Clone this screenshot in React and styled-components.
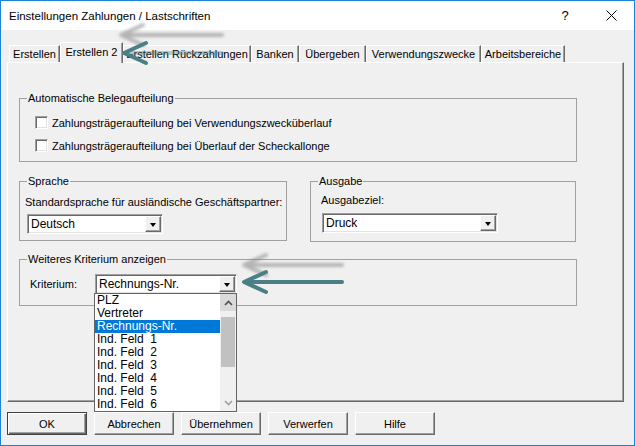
import React from "react";
import styled, { createGlobalStyle, css } from "styled-components";

const GlobalStyle = createGlobalStyle`
  html, body { margin: 0; padding: 0; background: #f0f0f0; }
  body { font-family: "Liberation Sans", Arial, sans-serif; }
`;

const Window = styled.div`
  position: relative;
  width: 635px;
  height: 446px;
  box-sizing: border-box;
  border: 1px solid #1883d7;
  background: #f0f0f0;
  display: flex;
  flex-direction: column;
  font-family: "Liberation Sans", Arial, sans-serif;
  font-size: 11px;
  color: #000;
  overflow: hidden;
`;

const TitleBar = styled.div`
  flex: none;
  height: 29px;
  background: #fff;
  display: flex;
  align-items: center;
`;

const Title = styled.div`
  flex: 1;
  padding-left: 8px;
  font-size: 11.5px;
`;

const CaptionButton = styled.div`
  width: 46px;
  height: 29px;
  display: flex;
  align-items: center;
  justify-content: center;
  font-size: 13px;
`;

const Body = styled.div`
  flex: 1;
  display: flex;
  flex-direction: column;
  padding: 12px 0 0 6px;
`;

const TabRow = styled.div`
  position: relative;
  z-index: 1;
  display: flex;
  align-items: flex-end;
  height: 21px;
  padding-left: 2px;
  margin-bottom: -1px;
`;

const Tab = styled.div`
  width: ${(p) => p.w}px;
  height: 17px;
  margin-bottom: 1px;
  box-sizing: border-box;
  background: #f0f0f0;
  border-top: 1px solid #fff;
  border-left: 1px solid #fff;
  border-right: 1px solid #696969;
  box-shadow: inset -1px 0 #a0a0a0;
  display: flex;
  align-items: center;
  justify-content: center;
  white-space: nowrap;
  ${(p) =>
    p.active &&
    css`
      height: 21px;
      margin-bottom: 0;
      padding-bottom: 3px;
    `}
`;

const Panel = styled.div`
  flex: none;
  width: 617px;
  height: 340px;
  box-sizing: border-box;
  border-top: 1px solid #fff;
  border-left: 1px solid #fff;
  border-right: 1px solid #696969;
  border-bottom: 1px solid #696969;
  box-shadow: inset -1px -1px #a0a0a0;
  padding: 28px 0 0 11px;
`;

const Group = styled.fieldset`
  margin: ${(p) => p.mt || 0}px 0 0 0;
  padding: 0;
  width: ${(p) => p.w}px;
  min-width: 0;
  box-sizing: border-box;
  border: 1px solid #a0a0a0;
`;

const Legend = styled.legend`
  margin-left: 7px;
  padding: 0 1px;
  line-height: 14px;
  font-size: 11px;
`;

const GroupBody = styled.div`
  padding: ${(p) => p.pad};
  display: flex;
  flex-direction: column;
  align-items: flex-start;
`;

const GroupRow = styled.div`
  display: flex;
  align-items: flex-start;
  gap: 23px;
  margin-top: 12px;
`;

const CheckRow = styled.div`
  height: 17px;
  display: flex;
  align-items: center;
  gap: 4px;
  & + & { margin-top: 6px; }
`;

const CheckBox = styled.span`
  width: 13px;
  height: 13px;
  box-sizing: border-box;
  background: #fff;
  border-top: 1px solid #a0a0a0;
  border-left: 1px solid #a0a0a0;
  border-right: 1px solid #fff;
  border-bottom: 1px solid #fff;
  box-shadow: inset 1px 1px #696969, inset -1px -1px #e3e3e3;
`;

const Label = styled.div`
  line-height: 14px;
  width: ${(p) => (p.w ? `${p.w}px` : "auto")};
  white-space: nowrap;
`;

const Combo = styled.div`
  position: relative;
  width: ${(p) => p.w}px;
  height: 20px;
  margin: ${(p) => p.m || 0};
  box-sizing: border-box;
  background: #fff;
  border-top: 1px solid #a0a0a0;
  border-left: 1px solid #a0a0a0;
  border-right: 1px solid #fff;
  border-bottom: 1px solid #fff;
  box-shadow: inset 1px 1px #696969, inset -1px -1px #e3e3e3;
  display: flex;
  align-items: center;
  padding: 1px;
`;

const ComboValue = styled.div`
  flex: 1;
  padding-left: 2px;
  font-size: 12px;
  white-space: nowrap;
`;

const ComboButton = styled.div`
  width: 16px;
  height: 16px;
  box-sizing: border-box;
  background: #f0f0f0;
  border: 1px solid;
  border-color: #fff #696969 #696969 #fff;
  box-shadow: inset -1px -1px #a0a0a0;
  display: flex;
  align-items: center;
  justify-content: center;
  &::after {
    content: "";
    border-left: 3.5px solid transparent;
    border-right: 3.5px solid transparent;
    border-top: 4px solid #000;
    margin-top: 1px;
  }
`;

const KritRow = styled.div`
  display: flex;
  align-items: center;
`;

const DropList = styled.div`
  position: absolute;
  z-index: 5;
  top: 100%;
  left: -2px;
  width: 143px;
  height: 119px;
  box-sizing: border-box;
  background: #fff;
  border: 1px solid #646464;
  display: flex;
`;

const Items = styled.div`
  flex: 1;
  display: flex;
  flex-direction: column;
`;

const Item = styled.div`
  height: 13px;
  line-height: 13px;
  padding-left: 2px;
  font-size: 12px;
  white-space: pre;
  ${(p) =>
    p.selected &&
    css`
      background: #0078d7;
      color: #fff;
    `}
`;

const ScrollBar = styled.div`
  width: 16px;
  display: flex;
  flex-direction: column;
  background: #f0f0f0;
`;

const ScrollArrow = styled.div`
  height: 17px;
  display: flex;
  align-items: center;
  justify-content: center;
  background: ${(p) => (p.hot ? "#dadada" : "#f0f0f0")};
`;

const Track = styled.div`
  flex: 1;
  padding-top: 6px;
`;

const Thumb = styled.div`
  height: 50px;
  margin: 0 1px;
  background: #c1c1c1;
`;

const ButtonRow = styled.div`
  display: flex;
  gap: 7px;
  margin-top: 10px;
`;

const Button = styled.div`
  width: 80px;
  height: 23px;
  box-sizing: border-box;
  background: #f0f0f0;
  border: 1px solid;
  border-color: #fff #696969 #696969 #fff;
  box-shadow: inset -1px -1px #a0a0a0;
  display: flex;
  align-items: center;
  justify-content: center;
  font-size: 11px;
  ${(p) =>
    p.primary &&
    css`
      border-color: #404040;
      box-shadow: inset 1px 1px #fff, inset -1px -1px #696969, inset -2px -2px #a0a0a0;
    `}
`;

const Annotations = styled.svg`
  position: absolute;
  top: -1px;
  left: -1px;
  pointer-events: none;
  z-index: 10;
`;

const tabs = [
  ["Erstellen", 51],
  ["Erstellen 2", 63, true],
  ["Erstellen Rückzahlungen", 128],
  ["Banken", 48],
  ["Übergeben", 67],
  ["Verwendungszwecke", 115],
  ["Arbeitsbereiche", 84],
];

const kriterien = [
  "PLZ",
  "Vertreter",
  "Rechnungs-Nr.",
  "Ind. Feld  1",
  "Ind. Feld  2",
  "Ind. Feld  3",
  "Ind. Feld  4",
  "Ind. Feld  5",
  "Ind. Feld  6",
];

function Chevron({ up, color }) {
  return (
    <svg width="9" height="6" viewBox="0 0 9 6">
      <polyline
        points={up ? "1,5 4.5,1.5 8,5" : "1,1 4.5,4.5 8,1"}
        fill="none"
        stroke={color}
        strokeWidth="1.6"
      />
    </svg>
  );
}

function Arrow({ tipX, y, endX, color, blur, shaftOpacity = 1 }) {
  return (
    <g
      stroke={color}
      strokeWidth="4"
      strokeLinecap="round"
      strokeLinejoin="round"
      fill="none"
      filter={blur ? "url(#ghost)" : undefined}
      opacity={blur ? 0.6 : 1}
    >
      <line x1={tipX + 2} y1={y} x2={endX} y2={y} opacity={shaftOpacity} />
      <polyline points={`${tipX + 22},${y - 10} ${tipX},${y} ${tipX + 22},${y + 10}`} />
    </g>
  );
}

export default function App() {
  return (
    <>
      <GlobalStyle />
      <Window>
        <TitleBar>
          <Title>Einstellungen Zahlungen / Lastschriften</Title>
          <CaptionButton>?</CaptionButton>
          <CaptionButton>
            <svg width="11" height="11" viewBox="0 0 11 11">
              <path d="M0.5 0.5 L10.5 10.5 M10.5 0.5 L0.5 10.5" stroke="#000" strokeWidth="1" />
            </svg>
          </CaptionButton>
        </TitleBar>
        <Body>
          <TabRow>
            {tabs.map(([t, w, a]) => (
              <Tab key={t} w={w} active={a}>
                {t}
              </Tab>
            ))}
          </TabRow>
          <Panel>
            <Group w={558}>
              <Legend>Automatische Belegaufteilung</Legend>
              <GroupBody pad="9px 0 7px 15px">
                <CheckRow>
                  <CheckBox />
                  Zahlungsträgeraufteilung bei Verwendungszwecküberlauf
                </CheckRow>
                <CheckRow>
                  <CheckBox />
                  Zahlungsträgeraufteilung bei Überlauf der Scheckallonge
                </CheckRow>
              </GroupBody>
            </Group>
            <GroupRow>
              <Group w={268}>
                <Legend>Sprache</Legend>
                <GroupBody pad="7px 0 6px 5px">
                  <Label>Standardsprache für ausländische Geschäftspartner:</Label>
                  <Combo w={136} m="5px 0 0 2px">
                    <ComboValue>Deutsch</ComboValue>
                    <ComboButton />
                  </Combo>
                </GroupBody>
              </Group>
              <Group w={266}>
                <Legend>Ausgabe</Legend>
                <GroupBody pad="5px 0 8px 10px">
                  <Label>Ausgabeziel:</Label>
                  <Combo w={176} m="6px 0 0 1px">
                    <ComboValue>Druck</ComboValue>
                    <ComboButton />
                  </Combo>
                </GroupBody>
              </Group>
            </GroupRow>
            <Group w={558} mt={10}>
              <Legend>Weiteres Kriterium anzeigen</Legend>
              <GroupBody pad="8px 0 11px 10px">
                <KritRow>
                  <Label w={65}>Kriterium:</Label>
                  <Combo w={142}>
                    <ComboValue>Rechnungs-Nr.</ComboValue>
                    <ComboButton />
                    <DropList>
                      <Items>
                        {kriterien.map((k) => (
                          <Item key={k} selected={k === "Rechnungs-Nr."}>
                            {k}
                          </Item>
                        ))}
                      </Items>
                      <ScrollBar>
                        <ScrollArrow hot>
                          <Chevron up color="#505050" />
                        </ScrollArrow>
                        <Track>
                          <Thumb />
                        </Track>
                        <ScrollArrow>
                          <Chevron color="#a0a0a0" />
                        </ScrollArrow>
                      </ScrollBar>
                    </DropList>
                  </Combo>
                </KritRow>
              </GroupBody>
            </Group>
          </Panel>
          <ButtonRow>
            <Button primary>OK</Button>
            <Button>Abbrechen</Button>
            <Button>Übernehmen</Button>
            <Button>Verwerfen</Button>
            <Button>Hilfe</Button>
          </ButtonRow>
        </Body>
        <Annotations width="635" height="446" viewBox="0 0 635 446">
          <defs>
            <filter id="ghost" x="-20%" y="-100%" width="140%" height="300%">
              <feGaussianBlur stdDeviation="1.8" />
            </filter>
          </defs>
          <Arrow tipX={121} y={35} endX={222} color="#8c8c8c" blur />
          <Arrow tipX={124} y={53} endX={222} color="#4b7f86" shaftOpacity={0.35} />
          <Arrow tipX={244} y={265} endX={342} color="#8c8c8c" blur />
          <Arrow tipX={244} y={282} endX={342} color="#4b7f86" />
        </Annotations>
      </Window>
    </>
  );
}
